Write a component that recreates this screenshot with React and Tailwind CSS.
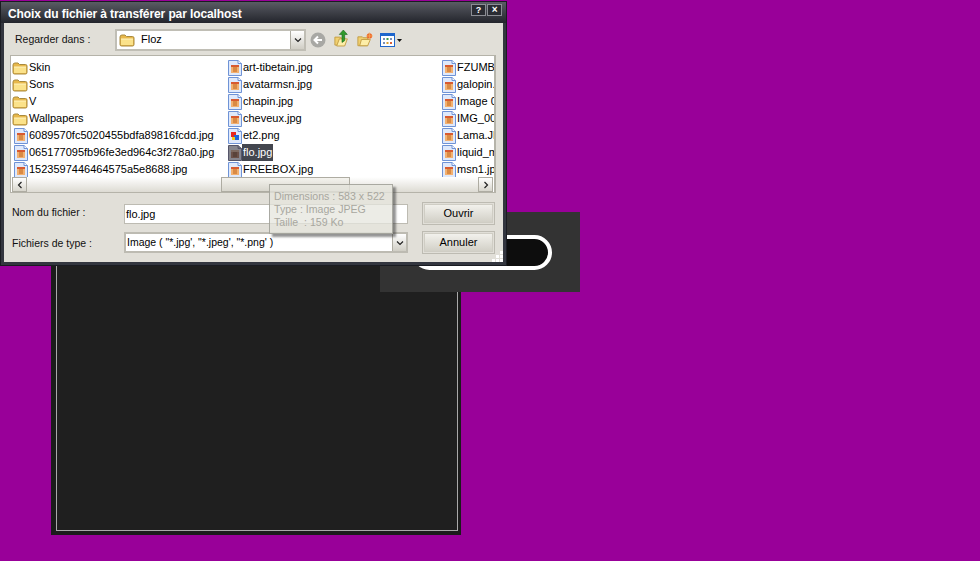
import React from 'react';

const font = { fontFamily: '"Liberation Sans", Arial, sans-serif' };

const columns = [
  [
    ['folder', 'Skin'],
    ['folder', 'Sons'],
    ['folder', 'V'],
    ['folder', 'Wallpapers'],
    ['jpg', '6089570fc5020455bdfa89816fcdd.jpg'],
    ['jpg', '065177095fb96fe3ed964c3f278a0.jpg'],
    ['jpg', '1523597446464575a5e8688.jpg'],
  ],
  [
    ['jpg', 'art-tibetain.jpg'],
    ['jpg', 'avatarmsn.jpg'],
    ['jpg', 'chapin.jpg'],
    ['jpg', 'cheveux.jpg'],
    ['png', 'et2.png'],
    ['selected', 'flo.jpg'],
    ['jpg', 'FREEBOX.jpg'],
  ],
  [
    ['jpg', 'FZUMBR'],
    ['jpg', 'galopin.'],
    ['jpg', 'Image 0'],
    ['jpg', 'IMG_00'],
    ['jpg', 'Lama.JF'],
    ['jpg', 'liquid_m'],
    ['jpg', 'msn1.jp'],
  ],
];

function FolderIcon({ className = 'w-4 h-4 shrink-0' }) {
  return (
    <svg className={className} viewBox="0 0 16 16">
      <path d="M1 5 Q1 3 3 3 H6 L7.5 4.5 H13.5 Q15 4.5 15 6 V12.5 Q15 14 13.5 14 H2.5 Q1 14 1 12.5 Z" fill="#e8b84a" stroke="#a98a3e" strokeWidth="1" />
      <path d="M2 7 H14 V12.5 Q14 13 13.5 13 H2.5 Q2 13 2 12.5 Z" fill="#fbe28a" />
      <path d="M2 7 H14" stroke="#fff3c0" />
    </svg>
  );
}

function FileIcon({ kind }) {
  const dim = kind === 'selected';
  return (
    <svg className="w-[14px] h-4 shrink-0" viewBox="0 0 14 16">
      <path d="M0.5 0.5 H10 L13.5 3.5 V15.5 H0.5 Z" fill={dim ? '#85858d' : '#dfe9fb'} stroke={dim ? '#55556a' : '#6f93d6'} />
      <path d="M10 0.5 V3.5 H13.5" fill={dim ? '#6f6f78' : '#f4f8ff'} stroke={dim ? '#55556a' : '#6f93d6'} />
      {kind === 'png' ? (
        <>
          <rect x="3" y="4" width="5" height="5" fill="#e8281c" />
          <rect x="6" y="7" width="5" height="5" fill="#1c66d8" />
          <rect x="4" y="9" width="3" height="3" fill="#f2c81c" />
        </>
      ) : (
        <>
          <rect x="3" y="5" width="8" height="8" fill={dim ? '#6b5148' : '#f2b070'} />
          <rect x="3" y="5" width="8" height="2" fill={dim ? '#7d6a60' : '#d85a30'} />
          <rect x="5" y="7" width="4" height="5" fill={dim ? '#59433a' : '#d98a45'} />
        </>
      )}
    </svg>
  );
}

function FileRow({ kind, name }) {
  return (
    <div className="flex items-center h-[17px] whitespace-nowrap">
      {kind === 'folder' ? <FolderIcon /> : <span className="w-4 flex justify-end shrink-0"><FileIcon kind={kind} /></span>}
      <span className={`px-px leading-[17px] ${kind === 'selected' ? 'bg-[#43464f] text-white' : 'text-black'}`}>{name}</span>
    </div>
  );
}

function Chevron({ d }) {
  return (
    <svg className="w-2 h-2" viewBox="0 0 8 8">
      <path d={d} fill="none" stroke="#222" strokeWidth="1.2" />
    </svg>
  );
}

function SmallButton({ d }) {
  return (
    <div className="w-[15px] h-[15px] shrink-0 flex items-center justify-center border border-[#aeaca2] bg-gradient-to-b from-white to-[#d8d6cd]">
      <Chevron d={d} />
    </div>
  );
}

function PushButton({ label }) {
  return (
    <div className="w-[73px] h-[23px] border border-[#bdbbb2] p-px">
      <div className="w-full h-full border border-[#cfcdc4] bg-gradient-to-b from-[#f2f1ec] to-[#d2d0c7] flex items-center justify-center text-black">
        {label}
      </div>
    </div>
  );
}

function NavIcons() {
  return (
    <div className="flex items-center ml-[4px]">
      <svg className="w-4 h-4" viewBox="0 0 16 16">
        <circle cx="8" cy="8" r="7.5" fill="#a8a8a4" />
        <path d="M12 8 H5 M8 4.5 L4.5 8 L8 11.5" fill="none" stroke="#fff" strokeWidth="2" />
      </svg>
      <svg className="w-[16px] h-[20px] ml-[8px] -mt-[3px]" viewBox="0 0 18 20">
        <path d="M1 9 H7 L8 10 H12 V18 H1 Z" fill="#f0d070" stroke="#c09a40" />
        <path d="M3 19 L6 11 H15 L12 19 Z" fill="#fdeea8" stroke="#c09a40" />
        <path d="M9 15 V6 H6 L10.5 1 L15 6 H12 V13 Z" fill="#2f9a2c" stroke="#1a6a1c" strokeWidth="0.7" />
      </svg>
      <svg className="w-[16px] h-[15px] ml-[7px]" viewBox="0 0 18 16">
        <path d="M1 5 H6 L7 6 H12 V15 H1 Z" fill="#f0d070" stroke="#c09a40" />
        <path d="M3 15 L5 8 H15 L12 15 Z" fill="#fdeea8" stroke="#c09a40" />
        <circle cx="14" cy="4" r="3" fill="#ef6a2a" />
        <path d="M14 0 V8 M10 4 H18" stroke="#f4b060" strokeWidth="0.8" />
      </svg>
      <svg className="w-[24px] h-[14px] ml-[7px]" viewBox="0 0 24 14">
        <rect x="0.5" y="0.5" width="14" height="13" fill="#fff" stroke="#1e66cc" />
        <rect x="1" y="1" width="13" height="2" fill="#1e66cc" />
        <rect x="3" y="5" width="2" height="2" fill="#7a8fb8" />
        <rect x="6.5" y="5" width="2" height="2" fill="#3a9a4a" />
        <rect x="10" y="5" width="2" height="2" fill="#7a8fb8" />
        <rect x="3" y="9" width="2" height="2" fill="#7a8fb8" />
        <rect x="6.5" y="9" width="2" height="2" fill="#d8a030" />
        <rect x="10" y="9" width="2" height="2" fill="#d8603a" />
        <path d="M17 6 H22 L19.5 9 Z" fill="#111" />
      </svg>
    </div>
  );
}

function Dialog() {
  return (
    <div className="absolute left-0 top-px w-[507px] h-[265px] flex flex-col border border-[#1a1c22] bg-[#33363f] text-[11px]" style={font}>
      <div className="relative h-[21px] shrink-0 flex items-center pl-[7px] pt-[3px] bg-gradient-to-b from-[#5a5c64] to-[#23252c] text-white font-bold text-[12px] tracking-[-0.1px]">
        Choix du fichier à transférer par localhost
        <div className="absolute right-[4px] top-[2px] flex gap-px">
          <div className="w-[15px] h-[12px] border border-[#8b8d94] bg-[#2a2c33] flex items-center justify-center text-[9px] leading-none">?</div>
          <div className="w-[15px] h-[12px] border border-[#8b8d94] bg-[#2a2c33] flex items-center justify-center text-[10px] leading-none">×</div>
        </div>
      </div>
      <div className="relative flex-1 mx-[3px] mb-[3px] bg-[#e1dfd8] flex flex-col">
        <div className="flex items-center h-[33px] pl-[11px]">
          <span className="w-[100px] text-[#111] text-[10.5px] mt-[1px]">Regarder dans :</span>
          <div className="w-[191px] h-[22px] border-2 border-[#c0beb5] bg-white flex items-center">
            <span className="ml-[2px]"><FolderIcon /></span>
            <span className="ml-[6px] text-black flex-1">Floz</span>
            <div className="w-[14px] h-full flex items-center justify-center border-l border-[#aeaca2] bg-gradient-to-b from-white to-[#d0cec5]">
              <Chevron d="M1 2.5 L4 5.5 L7 2.5" />
            </div>
          </div>
          <NavIcons />
        </div>
        <div className="ml-[6px] w-[486px] h-[138px] mt-[-1px] border border-[#b5b3a9] border-r-2 bg-white flex flex-col overflow-hidden">
          <div className="flex h-[121px] pt-[3px] pl-px overflow-hidden">
            <div className="w-[214px] shrink-0">{columns[0].map(([k, n]) => <FileRow key={n} kind={k} name={n} />)}</div>
            <div className="w-[214px] shrink-0">{columns[1].map(([k, n]) => <FileRow key={n} kind={k} name={n} />)}</div>
            <div className="w-[55px] shrink-0 overflow-hidden">{columns[2].map(([k, n]) => <FileRow key={n} kind={k} name={n} />)}</div>
          </div>
          <div className="flex items-center h-[15px] mx-px bg-gradient-to-b from-white to-[#dddbd3]">
            <SmallButton d="M5.5 1 L2.5 4 L5.5 7" />
            <div className="w-[194px]" />
            <div className="w-[129px] h-[15px] border border-[#aeaca2] bg-gradient-to-b from-[#f4f3ee] to-[#d8d6cd]" />
            <div className="flex-1" />
            <SmallButton d="M2.5 1 L5.5 4 L2.5 7" />
          </div>
        </div>
        <div className="flex items-center mt-[9px] pl-[8px] h-[23px]">
          <span className="w-[112px] text-[#111] text-[10.5px] -mt-[2px]">Nom du fichier :</span>
          <div className="w-[284px] h-[20px] border border-[#bdbbb2] bg-white pl-[1px] leading-[18px] text-black">flo.jpg</div>
          <div className="ml-[14px]"><PushButton label="Ouvrir" /></div>
        </div>
        <div className="flex items-center mt-[6px] pl-[8px] h-[23px]">
          <span className="w-[112px] text-[#111] text-[10.5px] mt-[2px]">Fichiers de type :</span>
          <div className="w-[284px] h-[21px] border-2 border-[#bdbbb2] bg-white flex items-center pl-[1px] text-[10.5px] text-black">
            <span className="flex-1 pt-px">Image ( "*.jpg', "*.jpeg', "*.png' )</span>
            <div className="w-[14px] h-full flex items-center justify-center border-l border-[#aeaca2] bg-gradient-to-b from-white to-[#d0cec5]">
              <Chevron d="M1 2.5 L4 5.5 L7 2.5" />
            </div>
          </div>
          <div className="ml-[14px]"><PushButton label="Annuler" /></div>
        </div>
        <svg className="absolute right-0 bottom-0 w-[11px] h-[11px]" viewBox="0 0 11 11">
          <path d="M8 0 h3 v3 h-3 Z M4 4 h3 v3 h-3 Z M8 4 h3 v3 h-3 Z M0 8 h3 v3 h-3 Z M4 8 h3 v3 h-3 Z M8 8 h3 v3 h-3 Z" fill="#fff" />
        </svg>
      </div>
    </div>
  );
}

function Tooltip() {
  return (
    <div className="absolute left-[269px] top-[184px] w-[124px] h-[50px] border border-[#8f8e86]/70 bg-[#e6e5dd]/75 shadow-[3px_3px_2px_rgba(60,60,60,0.55)] pl-[4px] pt-[5px] text-[10.6px] leading-[13px] text-[#a8a79f] whitespace-nowrap" style={font}>
      <div>Dimensions : 583 x 522</div>
      <div>Type : Image JPEG</div>
      <div>Taille&nbsp; : 159 Ko</div>
    </div>
  );
}

export default function App() {
  return (
    <div className="relative w-[980px] h-[561px] overflow-hidden bg-[#990099]">
      {/* dark player panel behind the dialog */}
      <div className="absolute left-[51px] top-[200px] w-[410px] h-[335px] bg-[#1b1b1b] p-[5px] pr-[3px] pb-[4px]">
        <div className="w-full h-full border border-[#a9a9a9] bg-[#1f1f1f]" />
      </div>
      {/* floating name box */}
      <div className="absolute left-[380px] top-[212px] w-[200px] h-[80px] bg-[#333333] pl-[32px] pt-[23px]">
        <div className="w-[140px] h-[35px] rounded-full border-[4px] border-white bg-[#0d0d0d]" />
      </div>
      <Dialog />
      <Tooltip />
    </div>
  );
}
